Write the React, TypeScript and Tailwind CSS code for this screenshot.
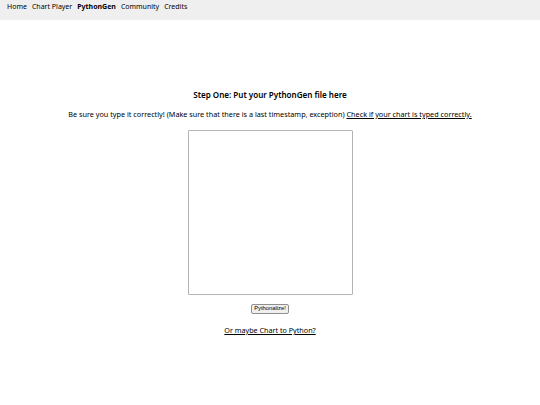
const App = () => {
  return (
    <div className="min-h-[405px] bg-white text-black" style={{ fontFamily: '"Noto Sans", sans-serif' }}>
      <nav className="h-[20px] bg-[#efefef] flex items-start gap-[5px] px-[7px] pt-[1.5px] text-[7px] leading-[10px]">
        <a className="text-black">Home</a>
        <a className="text-black">Chart Player</a>
        <a className="text-black font-bold">PythonGen</a>
        <a className="text-black">Community</a>
        <a className="text-black">Credits</a>
      </nav>
      <main className="flex flex-col items-center pt-[68px]">
        <h2 className="text-[8.05px] font-semibold leading-[14px]">Step One: Put your PythonGen file here</h2>
        <p className="mt-[7px] text-[7.25px] leading-[10px]">
          Be sure you type it correctly! (Make sure that there is a last timestamp, exception){' '}
          <a className="underline">Check if your chart is typed correctly.</a>
        </p>
        <textarea className="mt-[11px] w-[165px] h-[165px] border border-[#b4b4b4] rounded-[1px] resize-none" />
        <button
          className="mt-[9px] h-[10px] px-[2px] text-[5.8px] leading-none bg-[#efefef] border border-[#8f8f8f] rounded-[2px]"
          style={{ fontFamily: '"Liberation Sans", Arial, sans-serif' }}
        >
          Pythonalize!
        </button>
        <a className="mt-[11px] text-[7.2px] underline leading-[10px]">Or maybe Chart to Python?</a>
      </main>
    </div>
  );
};

export default App;
